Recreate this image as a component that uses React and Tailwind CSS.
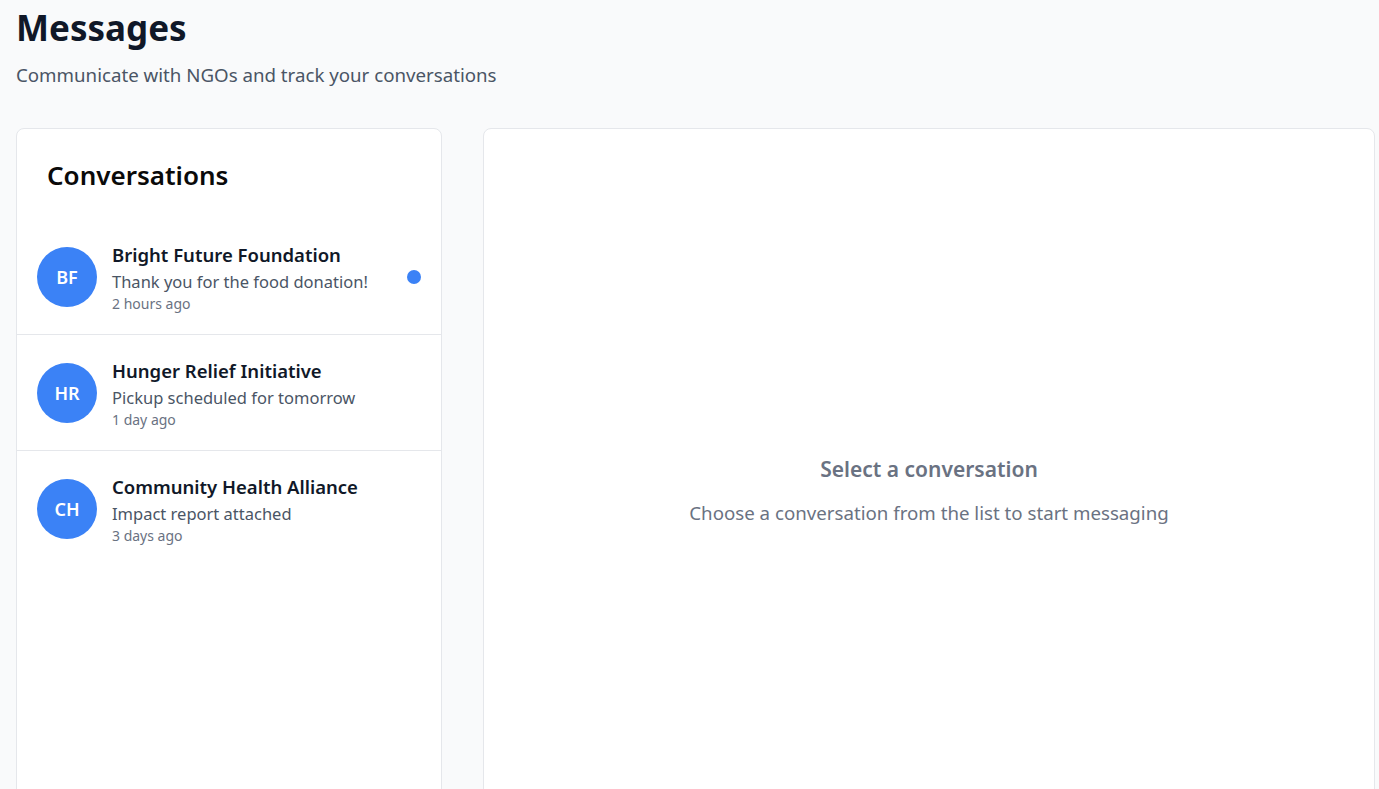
import React from 'react';

const conversations = [
  { initials: 'BF', name: 'Bright Future Foundation', preview: 'Thank you for the food donation!', time: '2 hours ago', unread: true },
  { initials: 'HR', name: 'Hunger Relief Initiative', preview: 'Pickup scheduled for tomorrow', time: '1 day ago', unread: false },
  { initials: 'CH', name: 'Community Health Alliance', preview: 'Impact report attached', time: '3 days ago', unread: false },
];

const ConversationRow = ({ c }) => (
  <div className="flex items-center gap-[15px] px-5 py-5">
    <div className="w-[60px] h-[60px] rounded-full bg-[#3b82f6] text-white flex items-center justify-center text-lg font-semibold shrink-0">
      {c.initials}
    </div>
    <div className="flex-1 min-w-0">
      <div className="pt-[2px] mb-[1px] text-[18.5px] leading-7 font-semibold text-gray-900">{c.name}</div>
      <div className="text-[16.5px] leading-6 text-gray-600">{c.preview}</div>
      <div className="text-sm leading-5 text-gray-500">{c.time}</div>
    </div>
    {c.unread && <div className="w-3.5 h-3.5 rounded-full bg-[#3b82f6] shrink-0" />}
  </div>
);

export default function App() {
  return (
    <div className="min-h-screen bg-[#f9fafb] pl-4 pr-1 pt-2 overflow-hidden" style={{ fontFamily: '"Noto Sans", sans-serif' }}>
      <h1 className="text-[35px] leading-10 font-bold text-gray-900">Messages</h1>
      <p className="mt-[13px] text-[18.7px] leading-7 text-gray-600">Communicate with NGOs and track your conversations</p>

      <div className="mt-[39px] grid grid-cols-[426px_1fr] gap-[41px]">
        <div className="h-[725px] bg-white border border-gray-200 rounded-lg">
          <div className="px-[30px] pt-[30px] pb-[28px]">
            <h2 className="text-[26px] leading-8 font-semibold text-[#0a0a0a]">Conversations</h2>
          </div>
          <div className="divide-y divide-gray-200">
            {conversations.map(c => (
              <ConversationRow key={c.initials} c={c} />
            ))}
          </div>
        </div>

        <div className="h-[725px] bg-white border border-gray-200 rounded-lg flex flex-col items-center justify-center text-center">
          <h3 className="text-[21px] leading-7 font-semibold text-gray-500">Select a conversation</h3>
          <p className="mt-4 text-[18.7px] leading-7 text-gray-500">Choose a conversation from the list to start messaging</p>
        </div>
      </div>
    </div>
  );
}
